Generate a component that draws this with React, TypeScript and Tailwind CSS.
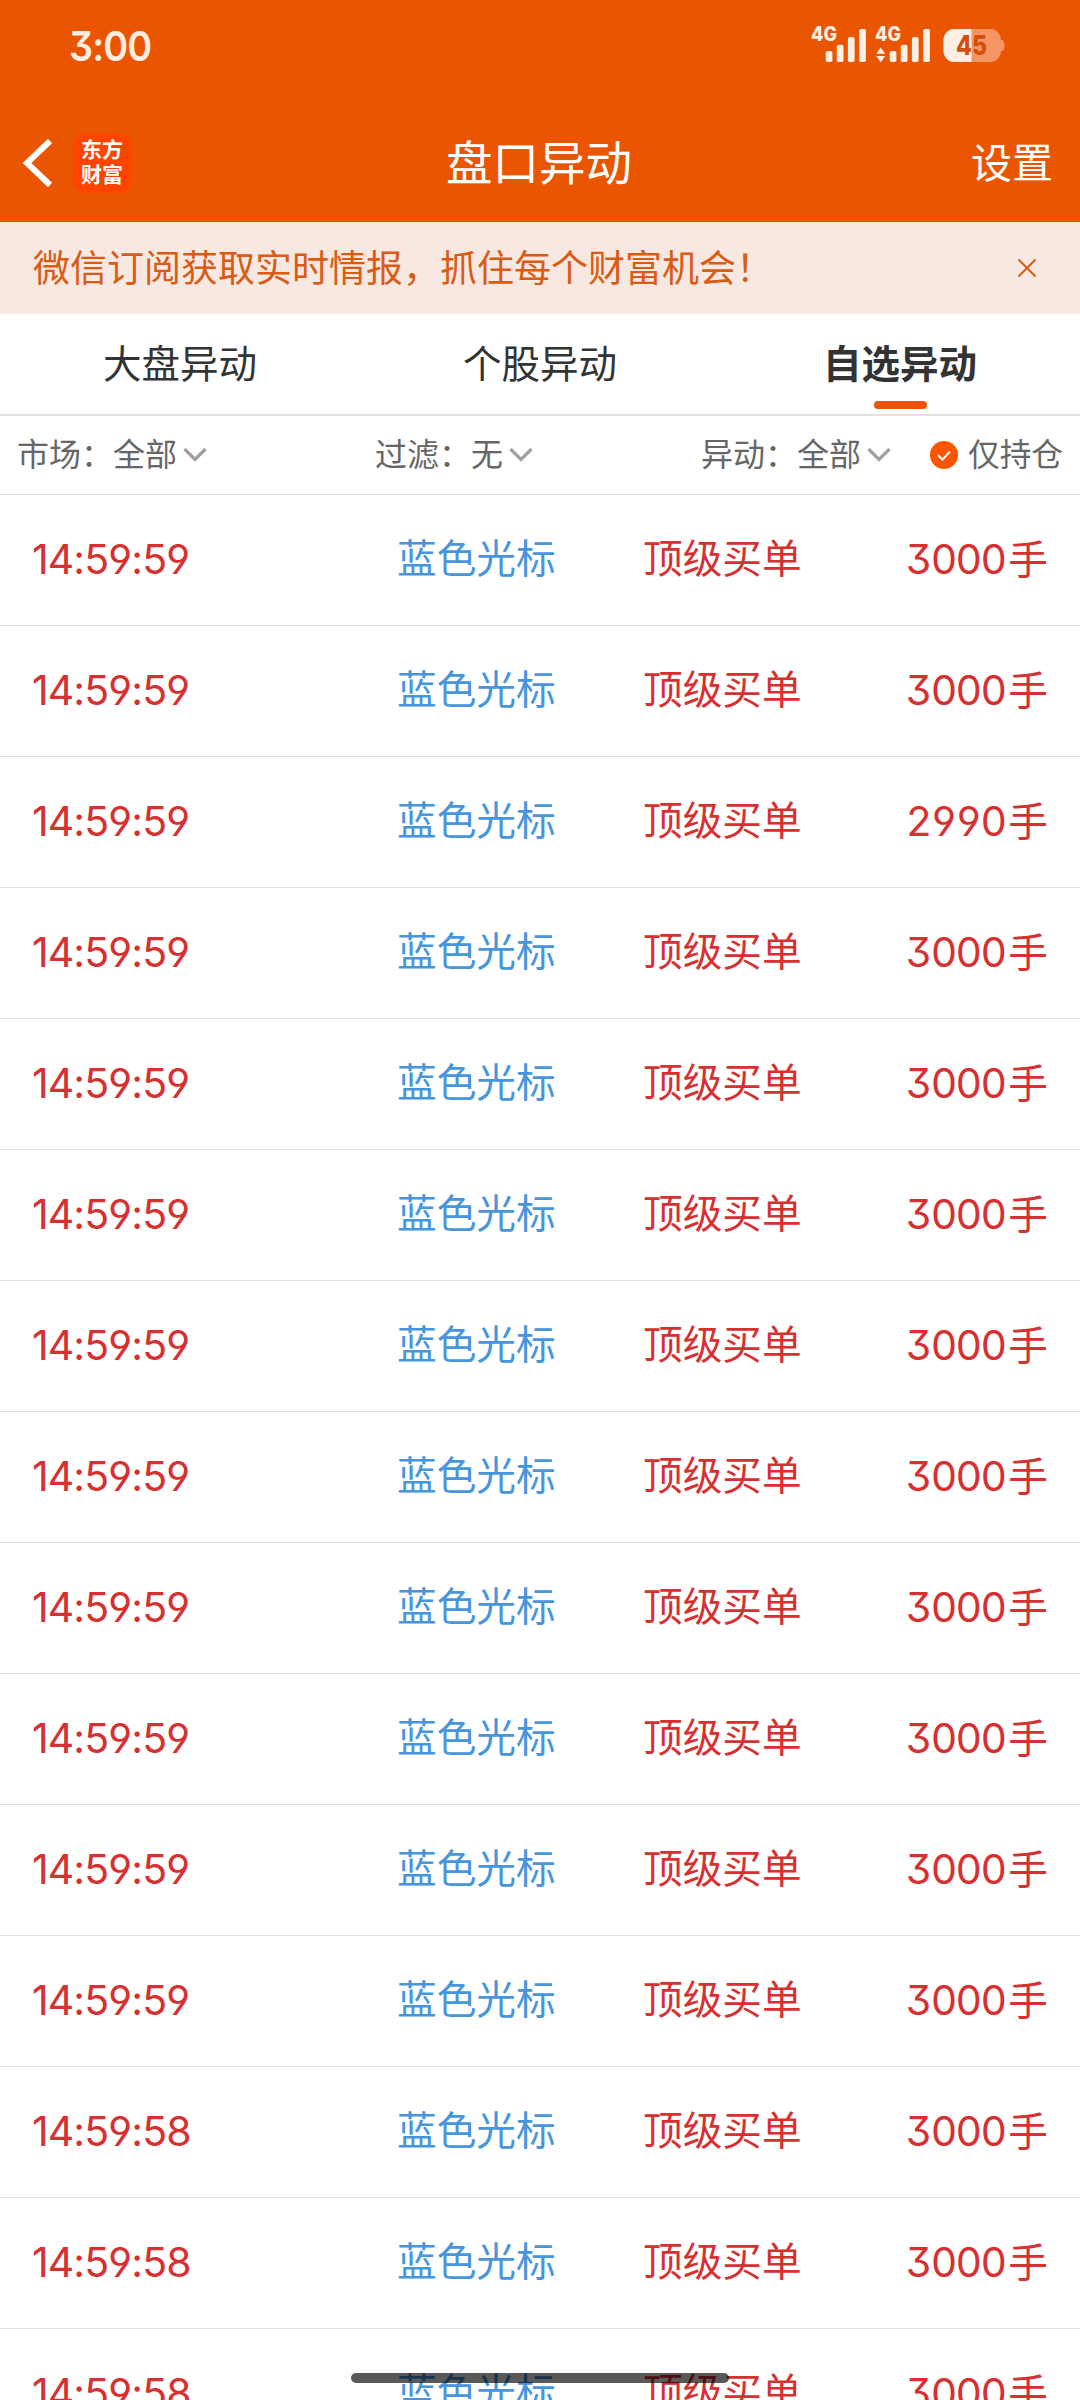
interface Trade {
  time: string;
  name: string;
  type: string;
  volume: number;
}

const times = [...Array(12).fill("14:59:59"), ...Array(3).fill("14:59:58")] as string[];

const trades: Trade[] = times.map((time, i) => ({
  time,
  name: "蓝色光标",
  type: "顶级买单",
  volume: i === 2 ? 2990 : 3000,
}));

const tabs = ["大盘异动", "个股异动", "自选异动"];

function Signal({ active }: { active?: boolean }) {
  return (
    <svg className="overflow-visible" width="58" height="52" viewBox="0 -5 58 52" fill="#ffeee4">
      <text x="0" y="16" fontSize="20" fontWeight="800" textLength="26" lengthAdjust="spacingAndGlyphs">4G</text>
      {active && <path d="M1.200 28.700 5.700 22.500 10.200 28.700ZM1.200 31 5.700 37.200 10.200 31Z" />}
      <rect x="14.700" y="26" width="6.700" height="11" rx="1.800" />
      <rect x="25.800" y="19.800" width="6.700" height="17.200" rx="1.800" />
      <rect x="36.900" y="12" width="6.700" height="25" rx="1.800" />
      <rect x="48.200" y="4" width="6.700" height="33" rx="1.800" />
    </svg>
  );
}

function Battery() {
  return (
    <svg width="62" height="34" viewBox="0 0 62 34">
      <path d="M57 11h2q2.500 1 2.500 5.500t-2.500 5.500h-2z" fill="#f69564" />
      <rect x="0.500" y="0" width="57.500" height="33" rx="11" fill="#f69564" />
      <path d="M11.500 0h17v33h-17a11 11 0 0 1-11-11V11a11 11 0 0 1 11-11Z" fill="#ffeee6" />
      <text x="13" y="26" fontSize="26.500" fontWeight="800" fill="#d04f0b" textLength="31" lengthAdjust="spacingAndGlyphs">45</text>
    </svg>
  );
}

function Chevron() {
  return (
    <svg width="24" height="16" viewBox="0 0 24 16" fill="none" stroke="#a0a0a0" strokeWidth="3.200">
      <path d="M1.500 2 12 12.500 22.500 2" />
    </svg>
  );
}

function Filter({ label, value }: { label: string; value: string }) {
  return (
    <div className="flex items-center gap-[6px]">
      <span>{label}：{value}</span>
      <Chevron />
    </div>
  );
}

export default function App() {
  return (
    <div className="relative h-[2400px] w-[1080px] overflow-hidden bg-white font-['Inter','Noto_Sans_CJK_SC',sans-serif] whitespace-nowrap [font-feature-settings:'cv04','cv09']">
      <header className="h-[222px] bg-[#ea5502] text-white">
        <div className="flex h-[92px] items-center pl-[69px] pr-[75px]">
          <span className="origin-left scale-x-[0.92] text-[41px] font-semibold leading-none tracking-[-1px] text-[#ffeee0]">3:00</span>
          <div className="ml-auto flex items-center">
            <div className="flex gap-[6px]">
              <Signal />
              <Signal active />
            </div>
            <div className="ml-[10px]">
              <Battery />
            </div>
          </div>
        </div>
        <div className="grid h-[142px] grid-cols-3 items-center pl-[22px] pr-[27px]">
          <div className="flex items-center gap-[20px]">
            <svg width="31" height="50" viewBox="0 0 31 50" fill="none" stroke="#fff" strokeWidth="6">
              <path d="M28 3 5 25 28 47" />
            </svg>
            <div className="flex h-[59px] w-[58px] flex-col items-center justify-center rounded-[12px] bg-[#ff4400] pb-[2px] text-[21px] font-bold leading-[25px]">
              <span>东方</span>
              <span>财富</span>
            </div>
          </div>
          <h1 className="pl-[3px] text-center text-[46.500px] leading-none">盘口异动</h1>
          <span className="text-right text-[41px] leading-none">设置</span>
        </div>
      </header>

      <div className="flex h-[92px] items-center justify-between bg-[#f7e8e1] pl-[33px] pr-[43px] text-[#d95b14]">
        <span className="text-[37px] leading-none">微信订阅获取实时情报，抓住每个财富机会！</span>
        <svg width="20" height="20" viewBox="0 0 20 20" fill="none" stroke="currentColor" strokeWidth="2">
          <path d="M1.500 1.500 18.500 18.500M18.500 1.500 1.500 18.500" />
        </svg>
      </div>

      <nav className="grid h-[102px] grid-cols-3 border-b-2 border-[#e2e2e2] text-[38.500px] text-[#333]">
        {tabs.map((tab, i) => (
          <div key={tab} className="relative flex items-center justify-center">
            <span className={i === 2 ? "font-bold leading-none" : "leading-none"}>{tab}</span>
            {i === 2 && <div className="absolute bottom-[5px] h-2 w-[53px] rounded-full bg-[#ea5502]" />}
          </div>
        ))}
      </nav>

      <div className="flex h-[79px] items-center border-b border-[#e2e2e2] pl-[17px] pr-[17px] text-[32px] leading-none text-[#666]">
        <div className="w-[358px]">
          <Filter label="市场" value="全部" />
        </div>
        <div className="w-[326px]">
          <Filter label="过滤" value="无" />
        </div>
        <Filter label="异动" value="全部" />
        <div className="ml-auto flex items-center gap-[10px]">
          <svg width="28" height="28" viewBox="0 0 28 28" fill="none">
            <circle cx="14" cy="14" r="14" fill="#ff5502" />
            <path d="M8 14.200 12.500 18.500 20 10.500" stroke="#fff" strokeWidth="2" />
          </svg>
          <span className="text-[31.700px]">仅持仓</span>
        </div>
      </div>

      <ul>
        {trades.map((trade, i) => (
          <li
            key={i}
            className="flex h-[131px] items-center border-b border-[#e2e2e2] pl-[32px] pr-[32px] text-[39.700px] leading-none text-[#d63031]"
          >
            <span className="w-[365px] pb-[2px] text-[41px] tracking-[-0.900px]">{trade.time}</span>
            <span className="w-[246px] text-[#4795dc]">{trade.name}</span>
            <span>{trade.type}</span>
            <span className="ml-auto">
              <span className="mr-[3px] text-[41px] tracking-[-1.700px] tabular-nums">{trade.volume}</span>手
            </span>
          </li>
        ))}
      </ul>

      <div className="absolute bottom-[17px] left-[351px] h-[10px] w-[378px] rounded-full bg-black/65" />
    </div>
  );
}
